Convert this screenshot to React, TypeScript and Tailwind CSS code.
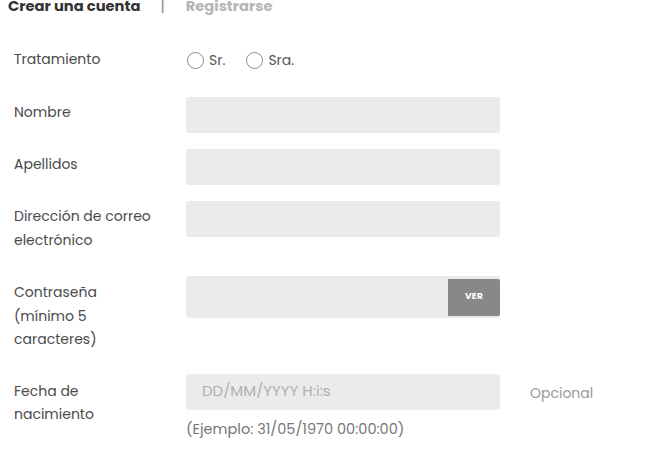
import React from "react";

const font = { fontFamily: '"Poppins", "Open Sans", "Liberation Sans", sans-serif' };

function Radio({ label }: { label: string }) {
  return (
    <label className="flex items-center gap-[5px]">
      <span className="w-[17px] h-[17px] rounded-full border-[1.5px] border-[#8a8a8a] bg-white" />
      <span className="text-[14px] text-[#555]">{label}</span>
    </label>
  );
}

function Row({ label, children, extra, className, labelClass }: { label: React.ReactNode; children?: React.ReactNode; extra?: React.ReactNode; className?: string; labelClass?: string }) {
  return (
    <div className={"flex items-start " + (className ?? "")}>
      <div className={"w-[186px] shrink-0 pl-[14px] pr-[8px] text-[14px] leading-[23.5px] text-[#4a4a4a] " + (labelClass ?? "pt-[4px]")}>{label}</div>
      <div className="w-[314px] shrink-0">{children}</div>
      {extra}
    </div>
  );
}

export default function App() {
  return (
    <div className="w-[657px] h-[449px] bg-white overflow-hidden" style={font}>
      <div className="flex items-center -mt-[4px] pl-[8px] text-[14.7px] font-bold leading-[20px]">
        <span className="text-[#333]">Crear una cuenta</span>
        <span className="ml-[20px] text-[#888] font-normal">|</span>
        <span className="ml-[21px] text-[#b5b5b5]">Registrarse</span>
      </div>

      <div className="flex items-center mt-[30px]">
        <div className="w-[186px] shrink-0 pl-[14px] text-[14px] text-[#4a4a4a] leading-[24px]">Tratamiento</div>
        <div className="flex items-center gap-[21px] pl-[1px] mt-[4px]">
          <Radio label="Sr." />
          <Radio label="Sra." />
        </div>
      </div>

      <Row label="Nombre" className="mt-[26px]">
        <div className="h-[36px] rounded-[3px] bg-[#ebebeb]" />
      </Row>
      <Row label="Apellidos" className="mt-[16px]">
        <div className="h-[36px] rounded-[3px] bg-[#ebebeb]" />
      </Row>
      <Row label={<>Dirección de correo<br />electrónico</>} className="mt-[16px]">
        <div className="h-[36px] rounded-[3px] bg-[#ebebeb]" />
      </Row>
      <Row label={<>Contraseña<br />(mínimo 5<br />caracteres)</>} className="mt-[24px]" labelClass="pt-[5px]">
        <div className="flex h-[42px] rounded-[3px] bg-[#ebebeb] items-center">
          <div className="flex-1" />
          <div className="w-[52px] h-[37px] bg-[#888] rounded-r-[2px] flex items-center justify-center text-white text-[9px] font-bold tracking-[0.3px]">VER</div>
        </div>
      </Row>
      <Row
        label={<>Fecha de<br />nacimiento</>}
        className="mt-[22px]"
        labelClass="pt-[6px]"
        extra={<div className="ml-[30px] pt-[7px] text-[14px] text-[#999] leading-[24px]">Opcional</div>}
      >
        <div className="h-[36px] rounded-[3px] bg-[#ebebeb] flex items-center pl-[16px] text-[15px] text-[#b0b0b0]">DD/MM/YYYY H:i:s</div>
        <div className="mt-[7px] text-[14.5px] text-[#777] leading-[24px]">(Ejemplo: 31/05/1970 00:00:00)</div>
      </Row>
    </div>
  );
}
